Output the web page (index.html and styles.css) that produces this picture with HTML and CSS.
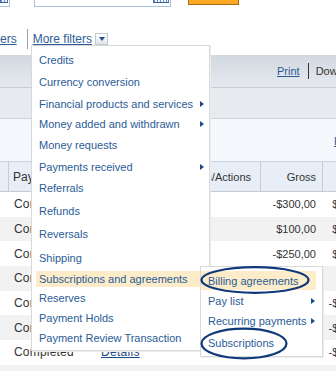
FILE: index.html
```html
<!DOCTYPE html>
<html>
<head>
<meta charset="utf-8">
<title>Activity filters</title>
<link rel="stylesheet" href="styles.css">
</head>
<body>
<div class="page">
  <div class="inputs">
    <div class="date date-a"><span class="cal"></span></div>
    <div class="date date-b"><span class="cal cal-b"></span></div>
    <div class="btn"></div>
  </div>

  <div class="filters">
    <div class="frow">
      <a class="lnk">ers</a>
      <span class="vsep"></span>
      <a class="lnk">More filters</a>
      <span class="ddbtn"><span class="tri-down"></span></span>
    </div>
  </div>

  <div class="toolbar">
    <a class="tlnk">Print</a><span class="tsep"></span><span class="tdl">Download</span>
  </div>
  <div class="bar2"></div>
  <div class="bar3"><a class="blink">Help</a></div>

  <table class="grid">
    <colgroup>
      <col class="c0"><col class="c1"><col class="c2"><col class="c3"><col class="c4"><col class="c5">
    </colgroup>
    <thead>
      <tr class="hd">
        <th class="first"></th>
        <th>Payment status</th>
        <th>Details</th>
        <th class="ra act">Order status/Actions</th>
        <th class="ra">Gross</th>
        <th class="ra">Fee</th>
      </tr>
    </thead>
    <tbody>
      <tr class="row"><td></td><td class="st">Completed</td><td class="dt"><a>Details</a></td><td></td><td class="amt">-$300,00</td><td class="amt fee">$300,00</td></tr>
      <tr class="row alt"><td></td><td class="st">Completed</td><td class="dt"><a>Details</a></td><td></td><td class="amt">$100,00</td><td class="amt fee">$100,00</td></tr>
      <tr class="row"><td></td><td class="st">Completed</td><td class="dt"><a>Details</a></td><td></td><td class="amt">-$250,00</td><td class="amt fee">$250,00</td></tr>
      <tr class="row alt"><td></td><td class="st">Completed</td><td class="dt"><a>Details</a></td><td></td><td class="amt">$10,00</td><td class="amt fee">$10,00</td></tr>
      <tr class="row"><td></td><td class="st">Completed</td><td class="dt"><a>Details</a></td><td></td><td class="amt">-$150,00</td><td class="amt fee">-$150,00</td></tr>
      <tr class="row alt"><td></td><td class="st">Completed</td><td class="dt"><a>Details</a></td><td></td><td class="amt">-$120,00</td><td class="amt fee">-$120,00</td></tr>
      <tr class="row"><td></td><td class="st">Completed</td><td class="dt"><a>Details</a></td><td></td><td class="amt">-$180,00</td><td class="amt fee">-$180,00</td></tr>
      <tr class="row alt"><td></td><td class="st">Completed</td><td class="dt"><a>Details</a></td><td></td><td class="amt">$90,00</td><td class="amt fee">$90,00</td></tr>
    </tbody>
  </table>
</div>

<div class="menu">
  <div class="mi h23">Credits</div>
  <div class="mi h22">Currency conversion</div>
  <div class="mi h21">Financial products and services<span class="arr"></span></div>
  <div class="mi h20">Money added and withdrawn<span class="arr"></span></div>
  <div class="mi h22">Money requests</div>
  <div class="mi h21">Payments received<span class="arr"></span></div>
  <div class="mi h22">Referrals</div>
  <div class="mi h23">Refunds</div>
  <div class="mi h24">Reversals</div>
  <div class="mi h23">Shipping</div>
  <div class="mi sel">Subscriptions and agreements</div>
  <div class="mi h20">Reserves</div>
  <div class="mi h20">Payment Holds</div>
  <div class="mi h20">Payment Review Transaction</div>
</div>

<div class="submenu">
  <div class="si sel19">Billing agreements</div>
  <div class="si h21">Pay list<span class="arr"></span></div>
  <div class="si h20">Recurring payments<span class="arr"></span></div>
  <div class="si h24">Subscriptions</div>
</div>

<svg class="marks" width="336" height="371" viewBox="0 0 336 371" aria-hidden="true">
  <ellipse cx="255" cy="280" rx="53.5" ry="12.8" fill="none" stroke="#10397a" stroke-width="2.2"/>
  <ellipse cx="244" cy="343.5" rx="42.5" ry="14.8" fill="none" stroke="#10397a" stroke-width="2.2"/>
</svg>
</body>
</html>
```

FILE: styles.css
```css
html, body {
  margin: 0;
  padding: 0;
  overflow: hidden;
  background: #fff;
}
body {
  width: 336px;
  height: 371px;
  position: relative;
  font-family: "Liberation Sans", Arial, sans-serif;
  font-size: 11px;
  color: #333;
}
.page {
  width: 382px;
}

/* top inputs */
.inputs {
  display: flex;
  height: 7px;
}
.date {
  box-sizing: border-box;
  height: 7px;
  display: flex;
  align-items: flex-start;
  border-bottom: 1px solid #a9c1de;
}
.date-a {
  width: 10px;
  border-right: 1px solid #a9c1de;
}
.date-b {
  width: 137px;
  margin-left: 24px;
  border-left: 1px solid #a9c1de;
  border-right: 1px solid #a9c1de;
  justify-content: flex-end;
  padding-right: 1px;
}
.cal {
  box-sizing: border-box;
  display: block;
  width: 8px;
  height: 3px;
  border-left: 1px solid #4a77b1;
  border-right: 1px solid #4a77b1;
  border-bottom: 1px solid #335f9c;
  background: repeating-linear-gradient(90deg, #6a92c4 0 1px, #f4f8fc 1px 3px);
}
.cal-b {
  width: 16px;
}
.btn {
  box-sizing: border-box;
  width: 51px;
  height: 5px;
  margin-left: 17px;
  background: #ffa826;
  border: 1px solid #a86a12;
  border-top: none;
}

/* filter row */
.filters {
  box-sizing: border-box;
  height: 48px;
  padding-top: 22px;
}
.frow {
  height: 20px;
  display: flex;
  align-items: center;
  font-size: 12px;
}
.lnk {
  color: #2b5c95;
  text-decoration: underline;
}
.vsep {
  width: 1px;
  height: 20px;
  background: #9aa1aa;
  margin: 0 5px 0 10px;
}
.ddbtn {
  box-sizing: border-box;
  width: 13px;
  height: 12px;
  margin-left: 3px;
  border: 1px solid #c3c8cf;
  background: linear-gradient(#ffffff, #e2e6eb);
  display: flex;
  align-items: center;
  justify-content: center;
}
.tri-down {
  width: 0;
  height: 0;
  border-top: 4px solid #1f4e8e;
  border-left: 3.5px solid transparent;
  border-right: 3.5px solid transparent;
}

/* toolbar bars */
.toolbar {
  box-sizing: border-box;
  height: 33px;
  padding-left: 277px;
  display: flex;
  align-items: center;
  background: linear-gradient(#d2d8e0, #e6eaef);
  border-bottom: 1px solid #c8cdd4;
  white-space: nowrap;
}
.tlnk {
  color: #2b5c95;
  text-decoration: underline;
}
.tsep {
  width: 1px;
  height: 16px;
  background: #333;
  margin: 0 7px 0 8px;
}
.tdl {
  color: #333;
}
.bar2 {
  box-sizing: border-box;
  height: 31px;
  background: #e7ebf0;
  border-bottom: 1px solid #d0d5dc;
}
.bar3 {
  box-sizing: border-box;
  height: 42px;
  background: #f4f7fb;
  display: flex;
  align-items: center;
  padding-left: 334px;
  padding-top: 2px;
}
.blink {
  color: #2b5c95;
  text-decoration: underline;
  white-space: nowrap;
}

/* table */
.grid {
  width: 382px;
  table-layout: fixed;
  border-collapse: separate;
  border-spacing: 0;
}
.c0 { width: 8px; }
.c1 { width: 86px; }
.c2 { width: 46px; }
.c3 { width: 120px; }
.c4 { width: 62px; }
.c5 { width: 60px; }
.hd {
  height: 31px;
}
.hd th {
  background: #e8eef7;
  border-top: 1px solid #ccd3dc;
  border-bottom: 1px solid #c6ccd4;
  border-left: 1px solid #c7cdd6;
  font-weight: normal;
  font-size: 12px;
  color: #333;
  text-align: left;
  padding: 0 0 0 4px;
  white-space: nowrap;
  overflow: hidden;
}
.hd th.first {
  border-left: none;
  padding: 0;
}
.hd th.ra {
  text-align: right;
  font-size: 11px;
  padding: 0 6px 0 0;
}
.hd th.act {
  padding-right: 9px;
}
.row {
  height: 24.7px;
  background: #fff;
}
.row.alt {
  background: #f2f2f2;
}
.row td {
  padding: 0;
  white-space: nowrap;
  color: #333;
}
.row td.st {
  font-size: 12px;
  letter-spacing: 0.2px;
  padding-left: 6px;
}
.row td.dt {
  padding-left: 7px;
  font-size: 12px;
  letter-spacing: 0.3px;
}
.dt a {
  color: #1d4a86;
  text-decoration: underline;
}
.row td.amt {
  text-align: right;
  font-size: 11px;
  padding-right: 6px;
}
.row td.fee {
  padding-right: 10px;
}

/* dropdown menu */
.menu {
  position: absolute;
  left: 31px;
  top: 45px;
  box-sizing: border-box;
  width: 179px;
  height: 306px;
  padding-top: 2px;
  background: #fff;
  border: 1px solid #d9d9d9;
  box-shadow: 1px 1px 0 #ededed;
  z-index: 2;
}
.mi, .si {
  display: flex;
  align-items: center;
  color: #2a5c96;
  font-size: 11px;
  white-space: nowrap;
}
.mi {
  margin: 0 4px;
  padding: 0 1px 0 3px;
}
.h20 { height: 20px; }
.h21 { height: 21px; }
.h22 { height: 22px; }
.h23 { height: 23px; }
.h24 { height: 24px; }
.mi.sel {
  height: 16px;
  margin-top: 2px;
  margin-bottom: 1px;
  background: #fdecc9;
}
.arr {
  margin-left: auto;
  width: 0;
  height: 0;
  border-left: 4px solid #1b4c8d;
  border-top: 3.5px solid transparent;
  border-bottom: 3.5px solid transparent;
}

/* submenu */
.submenu {
  position: absolute;
  left: 200px;
  top: 266px;
  box-sizing: border-box;
  width: 123px;
  height: 91px;
  padding-top: 4px;
  background: #fff;
  border: 1px solid #d9d9d9;
  box-shadow: 1px 1px 0 #ededed;
  z-index: 3;
}
.si {
  margin: 0 6px 0 0;
  padding: 0 1px 0 7px;
}
.si.sel19 {
  height: 19px;
  background: #fdecc9;
}

/* hand-drawn marks */
.marks {
  position: absolute;
  left: 0;
  top: 0;
  pointer-events: none;
  z-index: 4;
}
```
